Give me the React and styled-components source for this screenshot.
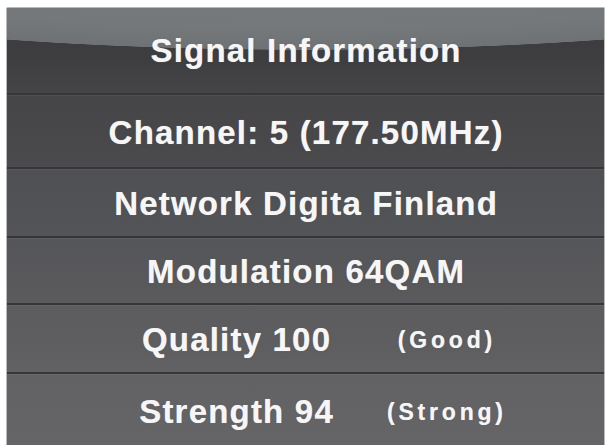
import React from "react";
import styled, { createGlobalStyle } from "styled-components";

const Global = createGlobalStyle`
  html, body {
    margin: 0;
    padding: 0;
    background: #ffffff;
    overflow: hidden;
  }
  body {
    font-family: "Liberation Sans", Arial, sans-serif;
  }
`;

const Page = styled.div`
  width: 607px;
  height: 445px;
  padding: 7px 0 0 6px;
  box-sizing: border-box;
`;

const Panel = styled.div`
  width: 599px;
  height: 446px;
  box-sizing: border-box;
  border: 1px solid #b9b9b9;
  border-bottom: none;
  border-radius: 2px 2px 0 0;
  display: flex;
  flex-direction: column;
  overflow: hidden;
  background: #636366;
`;

const Header = styled.div`
  flex: 0 0 85px;
  display: flex;
  align-items: center;
  justify-content: center;
  background:
    radial-gradient(ellipse 680px 100px at 50% -58px, #7b7e81 0%, #75787b 80%, #6f7275 99.5%, rgba(0,0,0,0) 100%),
    linear-gradient(#3b3b3e 0%, #3e3e41 60%, #454548 100%);
`;

const Row = styled.div`
  flex: 0 0 ${(p) => p.$h}px;
  box-sizing: border-box;
  border-top: 2px solid #363638;
  box-shadow: inset 0 1px 0 ${(p) => p.$hi};
  padding-top: 3px;
  display: flex;
  align-items: center;
  justify-content: center;
  background: linear-gradient(${(p) => p.$top} 0%, ${(p) => p.$bg} 55%, ${(p) => p.$bot} 100%);
`;

const Text = styled.span`
  color: #f6f6f6;
  font-family: "Liberation Sans", Arial, sans-serif;
  font-weight: 700;
  font-size: ${(p) => p.$size || 33}px;
  letter-spacing: ${(p) => p.$ls ?? 1.2}px;
  padding-left: ${(p) => p.$ls ?? 1.2}px;
  line-height: 1.15;
  white-space: nowrap;
  text-shadow: 0 0 1px rgba(255, 255, 255, 0.6), 0 0 2px rgba(0, 0, 0, 0.25);
`;

const Pair = styled.div`
  display: grid;
  grid-template-columns: 209px 209px;
  justify-content: center;
  justify-items: center;
  align-items: center;
  padding-left: 70px;
  width: 100%;
  box-sizing: border-box;
`;

const rows = [
  { h: 74, top: "#464649", bg: "#48484b", bot: "#4b4b4e", hi: "#505053", text: "Channel: 5 (177.50MHz)" },
  { h: 69, top: "#4e5053", bg: "#505255", bot: "#535558", hi: "#57595c", text: "Network Digita Finland" },
  { h: 67, top: "#55565a", bg: "#58585b", bot: "#5b5b5e", hi: "#5e5e61", text: "Modulation 64QAM" },
  { h: 69, top: "#5c5c5f", bg: "#5e5e61", bot: "#616164", hi: "#656568", text: "Quality 100", note: "(Good)" },
  { h: 75, top: "#626265", bg: "#646467", bot: "#656568", hi: "#6a6a6d", text: "Strength 94", note: "(Strong)" },
];

export default function App() {
  return (
    <>
      <Global />
      <Page>
        <Panel>
          <Header>
            <Text>Signal Information</Text>
          </Header>
          {rows.map((r) => (
            <Row key={r.text} $h={r.h} $top={r.top} $bg={r.bg} $bot={r.bot} $hi={r.hi}>
              {r.note ? (
                <Pair>
                  <Text>{r.text}</Text>
                  <Text $size={23} $ls={3.8}>{r.note}</Text>
                </Pair>
              ) : (
                <Text>{r.text}</Text>
              )}
            </Row>
          ))}
        </Panel>
      </Page>
    </>
  );
}
